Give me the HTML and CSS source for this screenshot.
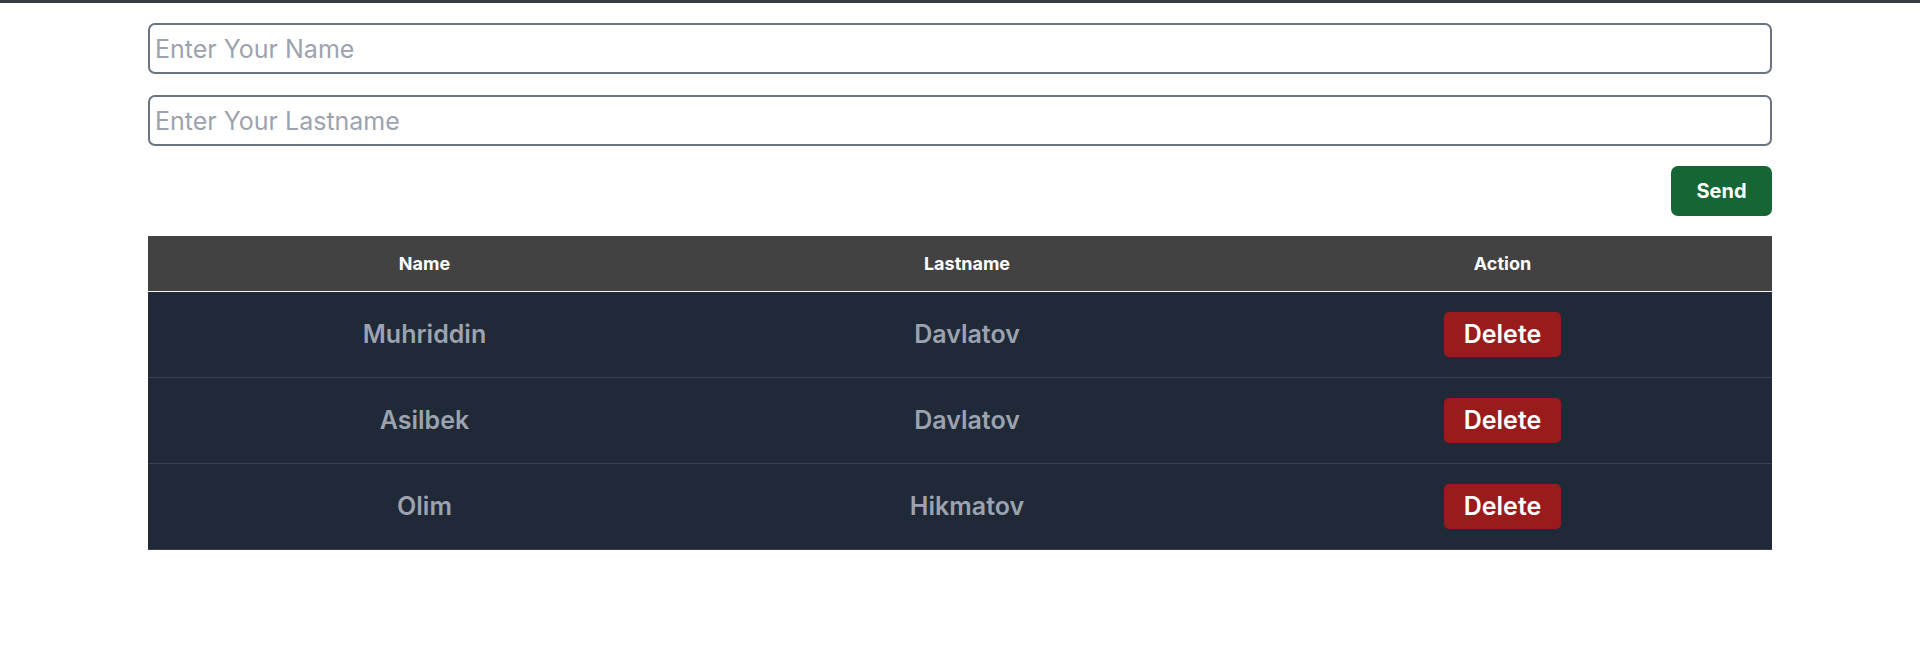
FILE: index.html
```html
<!DOCTYPE html>
<html lang="en">
<head>
<meta charset="utf-8">
<title>Users</title>
<link rel="stylesheet" href="styles.css">
</head>
<body>
<div class="topbar"></div>
<main class="container">
  <form class="form">
    <input class="field" type="text" placeholder="Enter Your Name">
    <input class="field field-second" type="text" placeholder="Enter Your Lastname">
    <div class="form-actions">
      <button class="btn-send" type="button">Send</button>
    </div>
  </form>
  <table class="users">
    <thead>
      <tr>
        <th class="col-name">Name</th>
        <th class="col-last">Lastname</th>
        <th class="col-action">Action</th>
      </tr>
    </thead>
    <tbody>
      <tr>
        <td>Muhriddin</td>
        <td>Davlatov</td>
        <td><button class="btn-delete" type="button">Delete</button></td>
      </tr>
      <tr>
        <td>Asilbek</td>
        <td>Davlatov</td>
        <td><button class="btn-delete" type="button">Delete</button></td>
      </tr>
      <tr>
        <td>Olim</td>
        <td>Hikmatov</td>
        <td><button class="btn-delete" type="button">Delete</button></td>
      </tr>
    </tbody>
  </table>
</main>
</body>
</html>
```
FILE: styles.css
```css
* { box-sizing: border-box; }
html, body { margin: 0; padding: 0; background: #ffffff; }
body { font-family: Inter, "Noto Sans", sans-serif; }

.topbar { height: 3px; background: #343d44; }

.container {
  width: 1624px;
  margin: 0 auto;
  padding-top: 20px;
}

.form { display: flex; flex-direction: column; }

.field {
  display: block;
  width: 100%;
  height: 51px;
  border: 2px solid #6b7280;
  border-radius: 7px;
  padding: 0 5px;
  font-family: Inter, sans-serif;
  font-size: 25px;
  color: #111827;
  background: #fff;
  outline: none;
}
.field::placeholder { color: #9ca3af; }
.field-second { margin-top: 21px; }

.form-actions {
  display: flex;
  justify-content: flex-end;
  margin-top: 20px;
}

.btn-send {
  width: 101px;
  height: 50px;
  border: none;
  border-radius: 7px;
  background: #166534;
  color: #ffffff;
  font-family: Inter, sans-serif;
  font-weight: 700;
  font-size: 20px;
  cursor: pointer;
}

.users {
  width: 100%;
  margin-top: 20px;
  border-collapse: collapse;
  table-layout: fixed;
}

.users thead tr {
  background: #424242;
  border-bottom: 1px solid #f3f4f6;
}
.users th {
  height: 55px;
  color: #ffffff;
  font-weight: 700;
  font-size: 18px;
  text-align: center;
  padding: 0;
}
.col-name { width: 553px; }
.col-last { width: 532px; }
.col-action { width: 539px; }

.users tbody tr {
  background: #1f2937;
  border-bottom: 1px solid #374151;
}
.users td {
  height: 86px;
  padding: 0;
  text-align: center;
  color: #9ca3af;
  font-size: 25px;
  font-weight: 600;
}

.btn-delete {
  height: 45px;
  padding: 0 20px;
  border: none;
  border-radius: 5px;
  background: #991b1b;
  color: #ffffff;
  font-family: Inter, sans-serif;
  font-size: 25px;
  font-weight: 600;
  cursor: pointer;
  vertical-align: middle;
}
```
